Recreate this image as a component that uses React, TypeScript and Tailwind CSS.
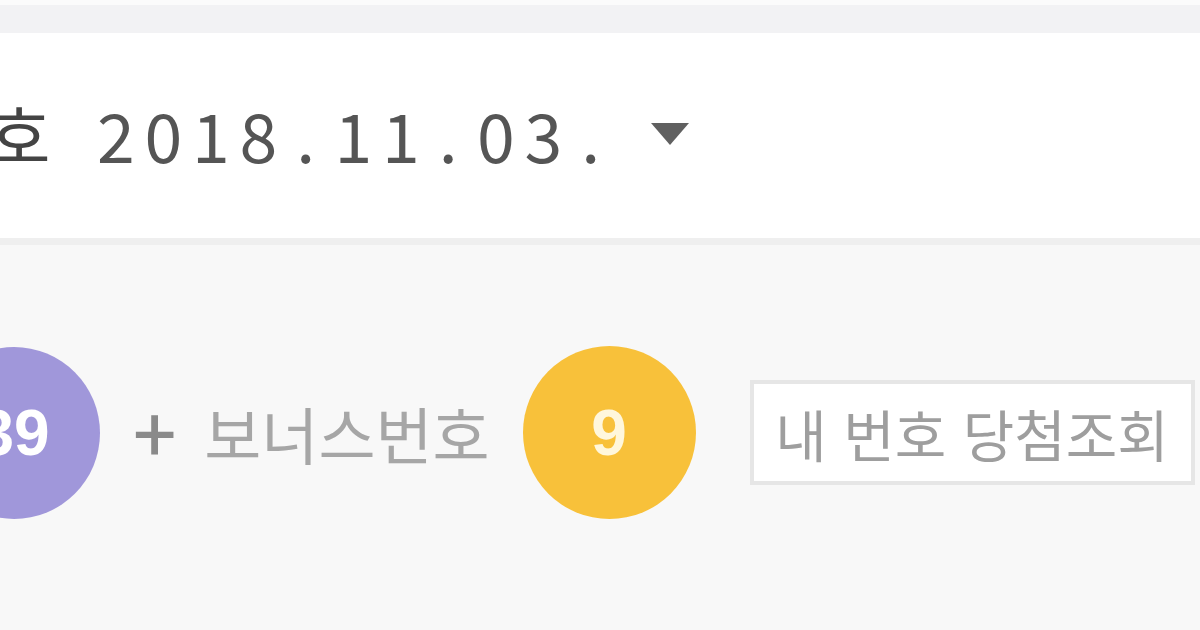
import React from "react";

const KR = { fontFamily: '"Noto Sans CJK KR", "Noto Sans", sans-serif' };

export default function App() {
  const date = "2018.11.03.".split("");
  return (
    <div
      className="w-[1200px] h-[630px] overflow-hidden flex flex-col bg-[#f8f8f8]"
      style={KR}
    >
      <div className="h-[5px] bg-[#fbfbfb]" />
      <div className="h-[28px] bg-[#f2f2f4]" />
      <div className="h-[205px] bg-white flex items-center">
        <div className="flex items-center text-[#555555] text-[68px] leading-none ml-[-12px] mt-[-4px]">
          <span className="w-[68px] text-[#444444]">호</span>
          <span className="w-[36px]" />
          {date.map((c, i) => (
            <span key={i} className="w-[47.5px] flex justify-center">
              {c}
            </span>
          ))}
          <span className="ml-[36px] w-0 h-0 border-l-[19px] border-r-[19px] border-t-[22px] border-l-transparent border-r-transparent border-t-[#606060]" />
        </div>
      </div>
      <div className="h-[7px] bg-[#efefef]" />
      <div className="flex-1 pt-[101px]">
        <div className="flex items-center">
          <div className="ml-[-72px] w-[172px] h-[172px] rounded-full bg-[#a097da] flex items-center justify-center text-white text-[64px] font-bold leading-none" style={{ fontFamily: '"Liberation Sans", Arial, sans-serif' }}>
            39
          </div>
          <span className="ml-[33px] text-[#8a8a8a] text-[76px] font-medium leading-none mt-[-6px]">+</span>
          <span className="ml-[28px] text-[#a6a6a6] text-[62px] leading-none">보너스번호</span>
          <div className="ml-[33px] w-[173px] h-[173px] rounded-full bg-[#f8c13a] flex items-center justify-center text-[#fff7dc] text-[64px] font-bold leading-none" style={{ fontFamily: '"Liberation Sans", Arial, sans-serif' }}>
            9
          </div>
          <div className="ml-[54px] w-[445px] h-[105px] border-[4px] border-[#e6e6e6] bg-white flex items-center justify-center text-[#9e9e9e] text-[56px] leading-none [word-spacing:4px]">
            내 번호 당첨조회
          </div>
        </div>
      </div>
    </div>
  );
}
